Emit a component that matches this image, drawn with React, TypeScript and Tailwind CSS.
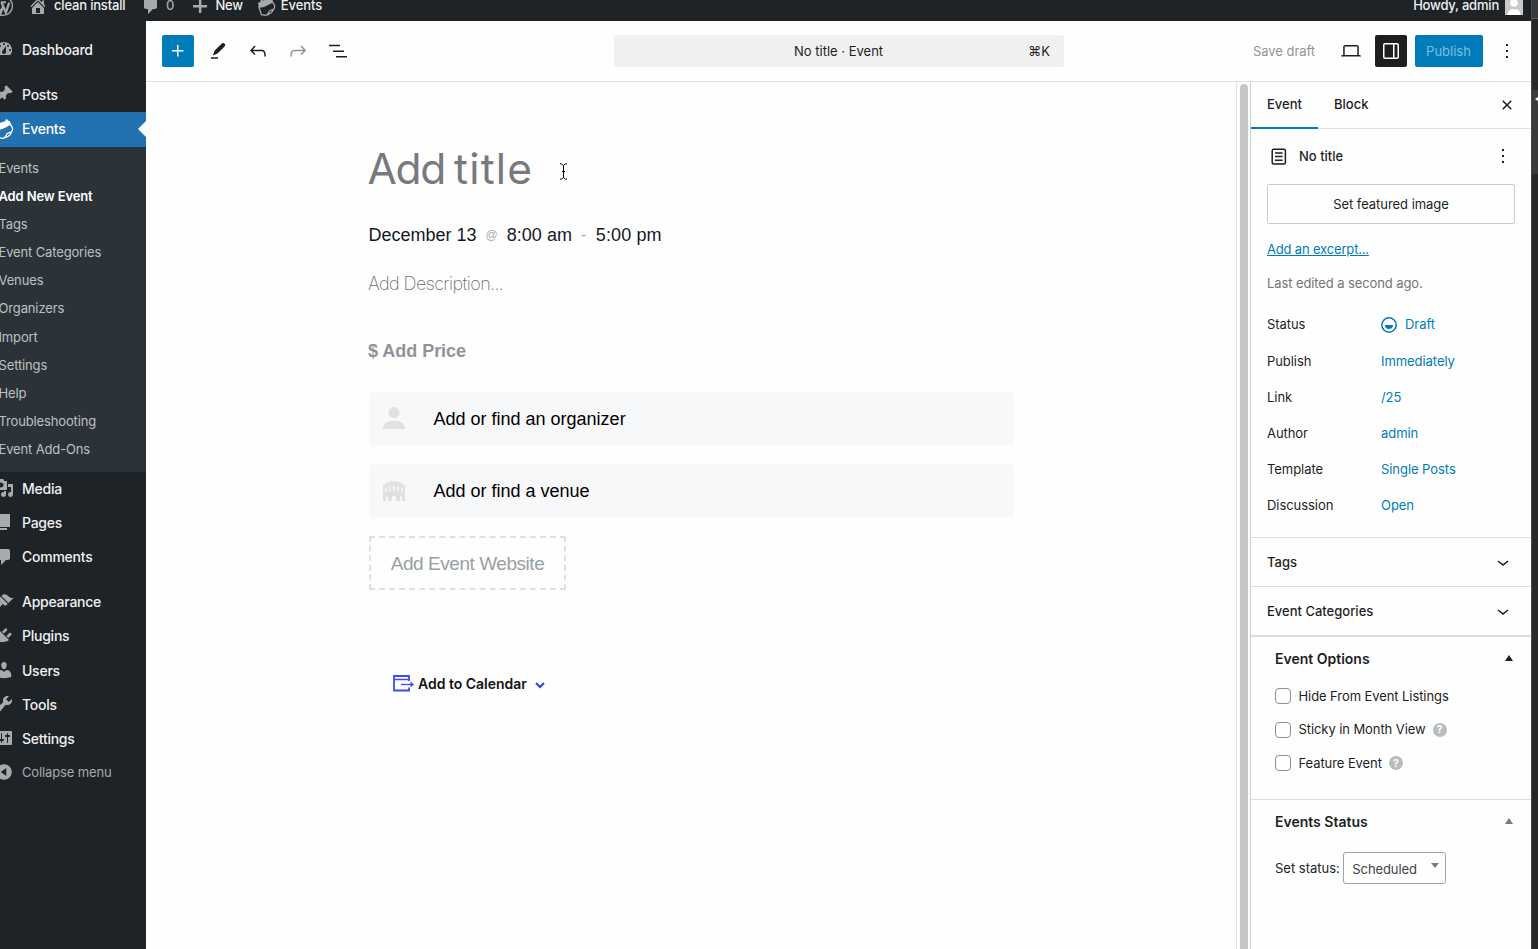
import React from "react";

const P = {
  dashboard:
    "M3.76 16h12.48c1.1-1.37 1.76-3.11 1.76-5 0-4.42-3.58-8-8-8s-8 3.58-8 8c0 1.89.66 3.63 1.76 5zM10 4c.55 0 1 .45 1 1s-.45 1-1 1-1-.45-1-1 .45-1 1-1zM6 6c.55 0 1 .45 1 1s-.45 1-1 1-1-.45-1-1 .45-1 1-1zm8 0c.55 0 1 .45 1 1s-.45 1-1 1-1-.45-1-1 .45-1 1-1zm-5.37 5.55L12 7v6c0 1.1-.9 2-2 2s-2-.9-2-2c0-.57.24-1.08.63-1.45zM4 10c.55 0 1 .45 1 1s-.45 1-1 1-1-.45-1-1 .45-1 1-1zm12 0c.55 0 1 .45 1 1s-.45 1-1 1-1-.45-1-1 .45-1 1-1z",
  posts:
    "M10.44 3.02l1.82-1.82 6.36 6.35-1.83 1.82c-1.05-.68-2.48-.57-3.41.36l-.75.75c-.92.93-1.04 2.35-.35 3.41l-1.83 1.82-2.41-2.41-2.8 2.79c-.42.42-3.38 2.71-3.8 2.29s1.86-3.39 2.28-3.81l2.79-2.79L4.1 9.36l1.83-1.82c1.05.69 2.48.57 3.4-.36l.75-.75c.93-.92 1.05-2.35.36-3.41z",
  media:
    "M13 11V4c0-.55-.45-1-1-1h-1.67L9 1H5L3.67 3H2c-.55 0-1 .45-1 1v7c0 .55.45 1 1 1h10c.55 0 1-.45 1-1zM7 4.5c1.38 0 2.5 1.12 2.5 2.5S8.38 9.5 7 9.5 4.5 8.38 4.5 7 5.62 4.5 7 4.5zM14 6h5v10.5c0 1.38-1.12 2.5-2.5 2.5S14 17.88 14 16.5s1.12-2.5 2.5-2.5c.17 0 .34.02.5.05V9h-3V6zm-4 8.05V13h2v3.5c0 1.38-1.12 2.5-2.5 2.5S7 17.88 7 16.5 8.12 14 9.5 14c.17 0 .34.02.5.05z",
  pages: "M6 15V2h10v13H6zm-1 1h8v2H3V5h2v11z",
  comments: "M5 2h9c1.1 0 2 .9 2 2v7c0 1.1-.9 2-2 2h-2l-5 5v-5H5c-1.1 0-2-.9-2-2V4c0-1.1.9-2 2-2z",
  appearance:
    "M14.48 11.06L7.41 3.99l1.5-1.5c.5-.56 2.3-.47 3.51.32 1.21.8 1.43 1.28 2.91 2.1 1.18.64 2.45 1.26 4.45.85zm-.71.71L6.7 4.7 4.93 6.47c-.39.39-.39 1.02 0 1.41l1.06 1.06c.39.39.39 1.03 0 1.42-.6.6-1.43 1.11-2.21 1.69-.35.26-.7.53-1.01.84C1.43 14.23.4 16.08 1.4 17.07c.99 1 2.84-.03 4.18-1.36.31-.31.58-.66.85-1.02.57-.78 1.08-1.61 1.69-2.21.39-.39 1.02-.39 1.41 0l1.06 1.06c.39.39 1.02.39 1.41 0z",
  plugins:
    "M13.11 4.36L9.87 7.6 8 5.73l3.24-3.24c.35-.34 1.05-.2 1.56.32.52.51.66 1.21.31 1.55zm-8 1.77l.91-1.12 9.01 9.01-1.19.84c-.71.71-2.63 1.16-3.82 1.16H6.14L4.9 17.26c-.59.59-1.54.59-2.12 0-.59-.58-.59-1.53 0-2.12l1.24-1.24v-3.88c0-1.13.4-3.19 1.09-3.89zm7.26 3.97l3.24-3.24c.34-.35 1.04-.21 1.55.31.52.51.66 1.21.31 1.55l-3.24 3.25z",
  users:
    "M10 9.25c-2.27 0-2.73-3.44-2.73-3.44C7 4.02 7.82 2 9.97 2c2.16 0 2.98 2.02 2.71 3.81 0 0-.41 3.44-2.68 3.44zm0 2.57L12.72 10c2.39 0 4.52 2.33 4.52 4.53v2.49s-3.65 1.13-7.24 1.13c-3.65 0-7.24-1.13-7.24-1.13v-2.49c0-2.25 1.94-4.48 4.47-4.48z",
  tools:
    "M16.68 9.77c-1.34 1.34-3.3 1.67-4.95.99l-5.41 6.52c-.99.99-2.59.99-3.58 0s-.99-2.59 0-3.57l6.52-5.42c-.68-1.65-.35-3.61.99-4.95 1.28-1.28 3.12-1.62 4.72-1.06l-2.89 2.89 2.82 2.82 2.86-2.87c.53 1.58.18 3.39-1.08 4.65z",
  settings:
    "M18 16V4c0-.55-.45-1-1-1H3c-.55 0-1 .45-1 1v12c0 .55.45 1 1 1h14c.55 0 1-.45 1-1zM8 11h1c.55 0 1 .45 1 1s-.45 1-1 1H8v1.5c0 .28-.22.5-.5.5s-.5-.22-.5-.5V13H6c-.55 0-1-.45-1-1s.45-1 1-1h1V5.5c0-.28.22-.5.5-.5s.5.22.5.5V11zm5-2h-1c-.55 0-1-.45-1-1s.45-1 1-1h1V5.500c0-.28.22-.5.5-.5s.5.22.5.5V7h1c.55 0 1 .45 1 1s-.45 1-1 1h-1v5.500c0 .28-.22.5-.5.5s-.5-.22-.5-.5V9z",
  collapse:
    "M10 2.200a7.800 7.800 0 1 0 0 15.600a7.800 7.800 0 1 0 0-15.600zM12.300 6v8L6.800 10z",
  home: "M16 8.5l1.53 1.53-1.06 1.06L10 4.6l-6.47 6.49-1.06-1.06L10 2.5l4 4v-2h2v4zm-6-2.46l6 5.99V18H4v-5.97zM12 17v-5H8v5h4z",
  plus: "M17 9v2.400h-5.600V17H8.900v-5.600H3V9h5.900V3h2.500v6z",
};

function Dash({ d, className }: { d: string; className?: string }) {
  return (
    <svg viewBox="0 0 20 20" fillRule="evenodd" className={"size-5 shrink-0 fill-[#a7aaad] " + (className ?? "")}>
      <path d={d} />
    </svg>
  );
}

function EventsIcon({ className }: { className: string }) {
  return (
    <svg viewBox="0 0 20 20" className={className} fill="none" stroke="currentColor">
      <path d="M1 6.400 3.800 5 3.600 2.800 5.400 2.400 6.200 3.800 11.400 2.200 11.400.6 13.200.2 14 1.600 15.800 2.200 17.400 5.800C13 7 10 10.800 2.200 11.400z" fill="currentColor" stroke="none" />
      <path d="M1.800 9.500 4.600 18.600 8.800 19.300C13 18.600 11.600 15 14 14.200L17.600 12.800C19.600 10.800 18.800 8.600 16.600 5.600M8.800 19.300C12.500 19.200 16.600 16 17.600 12.800" strokeWidth="1.300" />
    </svg>
  );
}

function MenuItem({ d, label }: { d: string; label: string }) {
  return (
    <div className="-ml-1.5 flex h-[34.2px] shrink-0 items-center gap-2">
      <Dash d={d} />
      <span className="text-[14px] font-medium tracking-[-0.25px] text-[#f0f0f1]">{label}</span>
    </div>
  );
}

const subItems = [
  "Events", "Add New Event", "Tags", "Event Categories", "Venues", "Organizers",
  "Import", "Settings", "Help", "Troubleshooting", "Event Add-Ons",
];

function AdminBar() {
  return (
    <header className="flex h-[21px] shrink-0 bg-[#1d2327]">
      <div className="-mt-[10px] flex h-8 w-[1531px] shrink-0 items-center text-[13px] font-medium leading-[10px] text-[#f0f0f1] [&>span]:pb-[2px]">
        <svg viewBox="0 0 20 20" className="-ml-[8px] size-[22px] shrink-0" fill="none" stroke="#a7aaad">
          <circle cx="10" cy="10" r="8.600" strokeWidth="1.200" />
          <path d="M4 6.600 8 16 10.400 9.400M8.600 6.600 12.600 16 15.600 7M2.600 6.600H7M8 6.600h4.600" strokeWidth="2" />
        </svg>
        <Dash d={P.home} className="-mt-px ml-[14px]" />
        <span className="ml-[6px] w-[88px] whitespace-nowrap tracking-[-0.18px]">clean install</span>
        <Dash d={P.comments} className="-ml-[1px]" />
        <span className="ml-[5px] text-[#a7aaad]">0</span>
        <Dash d={P.plus} className="ml-[16px]" />
        <span className="ml-[5px] tracking-[-0.200px]">New</span>
        <EventsIcon className="ml-[14px] size-[19px] text-[#a7aaad]" />
        <span className="ml-[5px] tracking-[-0.1px]">Events</span>
        <span className="ml-auto tracking-[-0.2px]">Howdy, admin</span>
        <svg viewBox="0 0 18 18" className="-mt-[1px] ml-[6px] mr-[8px] size-[18px]">
          <rect width="18" height="18" fill="#c9c9c9" />
          <circle cx="9" cy="6" r="3.800" fill="#fff" />
          <path d="M2.500 18c0-3.500 2-5.500 4.500-6l2 .5 2-.5c2.500.5 4.500 2.500 4.500 6z" fill="#fff" />
        </svg>
      </div>
    </header>
  );
}

function Sidebar() {
  return (
    <nav className="flex w-[146px] shrink-0 flex-col overflow-hidden bg-[#1d2327] pt-[11px]">
      <MenuItem d={P.dashboard} label="Dashboard" />
      <div className="h-[10.800px] shrink-0" />
      <MenuItem d={P.posts} label="Posts" />
      <div className="mt-px flex h-[35px] shrink-0 items-center justify-between bg-[#2271b1]">
        <div className="-ml-1.5 -mt-[2px] flex items-center gap-2">
          <EventsIcon className="size-5 text-white" />
          <span className="text-[14px] font-medium tracking-[-0.25px] text-white">Events</span>
        </div>
        <svg viewBox="0 0 8 16" className="-mt-px h-4 w-2 fill-[#fefefe]"><path d="M8 0v16L0 8z" /></svg>
      </div>
      <div className="h-[325px] shrink-0 bg-[#2c3338] pt-[7.500px]">
        {subItems.map((s, i) => (
          <div
            key={s}
            className={
              "-ml-[1.500px] flex h-[28.1px] items-center whitespace-nowrap text-[13px] tracking-[-0.14px] " +
              (i === 1 ? "font-semibold text-white" : "text-[#bcc0c3]")
            }
          >
            {s}
          </div>
        ))}
      </div>
      <div className="-mt-px">
        <MenuItem d={P.media} label="Media" />
        <MenuItem d={P.pages} label="Pages" />
        <MenuItem d={P.comments} label="Comments" />
        <div className="h-[10.800px] shrink-0" />
        <MenuItem d={P.appearance} label="Appearance" />
        <MenuItem d={P.plugins} label="Plugins" />
        <MenuItem d={P.users} label="Users" />
        <MenuItem d={P.tools} label="Tools" />
        <MenuItem d={P.settings} label="Settings" />
        <div className="-ml-1.5 flex h-[34px] shrink-0 items-center gap-2">
          <Dash d={P.collapse} />
          <span className="text-[13px] tracking-[-0.13px] text-[#a7aaad]">Collapse menu</span>
        </div>
      </div>
    </nav>
  );
}

function Dots() {
  return (
    <svg viewBox="0 0 24 24" className="size-6 fill-[#1e1e1e]">
      <path d="M13 19h-2v-2h2v2zm0-6h-2v-2h2v2zm0-6h-2V5h2v2z" />
    </svg>
  );
}

function EditorHeader() {
  return (
    <div className="flex h-[61px] shrink-0 items-center border-b border-[#e0e0e0] bg-[#fefefe] text-[13px] text-[#1e1e1e]">
      <div className="ml-4 flex size-8 items-center justify-center rounded-[2px] bg-[#007cba]">
        <svg viewBox="0 0 24 24" className="size-6 fill-white"><path d="M11 12.500V17.500H12.500V12.500H17.500V11H12.500V6H11V11H6V12.500H11Z" /></svg>
      </div>
      <svg viewBox="0 0 24 24" className="ml-3 size-6 fill-[#1e1e1e]">
        <path d="M18.600 4.700c-.9-.9-2.100-.9-3 0l-6.900 6.900-2 4.800 4.800-2 7.100-7c.8-.8.8-2 0-2.700zM5 18.200h7v1.600H5z" />
      </svg>
      <svg viewBox="0 0 24 24" className="ml-4 size-6 fill-[#1e1e1e]">
        <path d="M18.300 11.700c-.6-.6-1.400-.9-2.300-.9H6.700l2.900-3.300-1.100-1-4.500 5L8.500 16l1-1-2.700-2.700H16c.5 0 .9.2 1.300.5 1 1 1 3.400 1 4.500v.3h1.500v-.2c0-1.500 0-4.300-1.500-5.700z" />
      </svg>
      <svg viewBox="0 0 24 24" className="ml-4 size-6 fill-[#949494]">
        <path d="M15.600 6.500l-1.100 1 2.900 3.300H8c-.9 0-1.700.3-2.300.9-1.400 1.500-1.400 4.200-1.400 5.600v.2h1.500v-.3c0-1.100 0-3.500 1-4.500.3-.3.700-.5 1.300-.5h9.200L14.500 15l1.100 1.100 4.600-4.600-4.600-5z" />
      </svg>
      <svg viewBox="0 0 24 24" className="ml-4 size-6 fill-[#1e1e1e]">
        <path d="M3 5.800h11v1.400H3zM7 11.500h11v1.500H7zM10 17h11v1.500H10z" />
      </svg>
      <div className="ml-[264px] flex h-8 w-[450px] items-center rounded-[3px] bg-[#f0f0f0] pt-[2px]">
        <span className="ml-[180px]">No title · Event</span>
        <span className="ml-auto mr-[14px]">⌘K</span>
      </div>
      <span className="ml-[189px] pt-[2px] tracking-[-0.050px] text-[#949494]">Save draft</span>
      <svg viewBox="0 0 24 24" className="ml-[23.500px] size-6 fill-[#1e1e1e]">
        <path d="M20.500 16h-.7V8c0-1.100-.9-2-2-2H6.200c-1.100 0-2 .9-2 2v8h-.7c-.8 0-1.500.7-1.500 1.500h20c0-.8-.7-1.500-1.500-1.500zM5.700 8c0-.3.200-.5.500-.5h11.600c.3 0 .5.200.5.500v8H5.700V8z" />
      </svg>
      <div className="ml-3 flex size-8 items-center justify-center rounded-[2px] bg-[#1e1e1e]">
        <svg viewBox="0 0 24 24" className="size-6 fill-white" fillRule="evenodd">
          <path d="M18 4H6c-1.100 0-2 .9-2 2v12c0 1.100.9 2 2 2h12c1.100 0 2-.9 2-2V6c0-1.100-.9-2-2-2zm-4 14.500H6c-.3 0-.5-.2-.5-.5V6c0-.3.200-.5.500-.5h8v13zm4.500-.5c0 .3-.2.5-.5.5h-2.500v-13H18c.3 0 .5.200.5.500v12z" />
        </svg>
      </div>
      <div className="ml-2 flex h-8 w-[68px] items-center justify-center rounded-[2px] bg-[#007cba] pt-[2px] text-[#7fbddc]">Publish</div>
      <div className="ml-3"><Dots /></div>
    </div>
  );
}

function Canvas() {
  return (
    <main className="w-[1090px] shrink-0 pl-[223px] font-['Liberation_Sans',sans-serif]">
      <div className="mt-[59px] flex h-[56px] items-center">
        <span className="-ml-[1.500px] w-[163px] whitespace-pre font-['Inter',sans-serif] text-[42.5px] leading-none text-[#78787f]">
          <span className="tracking-[-1.300px]">Add</span>
          <span className="tracking-[1.200px] [word-spacing:-4px]"> title</span>
        </span>
        <svg viewBox="0 0 9 17" className="ml-[28px] mt-[4px] h-[17px] w-[9px]" fill="none" stroke="#000">
          <path d="M1 .8C3 .8 4.500 1.500 4.500 3.500v10c0 2-1.500 2.700-3.500 2.700M8 .8C6 .8 4.500 1.500 4.500 3.500v10c0 2 1.500 2.700 3.500 2.700M3 8.500h3" />
        </svg>
      </div>
      <div className="-ml-[0.500px] mt-[25px] flex h-[26px] items-center whitespace-pre text-[18px] text-[#141827]">
        <span>December 13</span>
        <span className="ml-[9px] mr-[9px] text-[12px] text-[#a9abb1]">@</span>
        <span className="tracking-[0.030px]">8:00 am</span>
        <span className="ml-[9px] mr-[9.500px] text-[16px] text-[#a9abb1]">-</span>
        <span className="tracking-[0.120px]">5:00 pm</span>
      </div>
      <div className="-ml-px mt-[22px] flex h-[26px] items-center font-['Inter',sans-serif] text-[18px] font-extralight tracking-[-0.600px] text-[#6f6f73]">Add Description...</div>
      <div className="-ml-px mt-[42px] flex h-[26px] items-center text-[18px] font-bold tracking-[-0.030px] text-[#8d949b]">$ Add Price</div>
      <div className="mt-[28px] flex h-[53px] w-[645px] items-center rounded-[4px] bg-[#f7f8fa] text-[18px] text-black">
        <svg viewBox="0 0 22 22" className="-mt-[2px] ml-[14px] size-[22px] fill-[#e1e1e1]">
          <circle cx="11" cy="5.600" r="5.600" />
          <path d="M0 21c0-4 5-7.500 11-7.500S22 17 22 21c0 .7-.3 1-1 1H1c-.7 0-1-.3-1-1z" />
        </svg>
        <span className="ml-[28.500px] pt-[2px]">Add or find an organizer</span>
      </div>
      <div className="mt-[19px] flex h-[53px] w-[645px] items-center rounded-[4px] bg-[#f7f8fa] text-[18px] text-black">
        <svg viewBox="0 0 22 20" className="ml-[14px] h-[20px] w-[22px] fill-[#e1e1e1]" fillRule="evenodd">
          <path d="M0 20V5C3 1.500 7 0 11 0s8 1.500 11 5v15h-3v-4q-1-1.500-2 0v4h-4v-4q-2-2.500-4 0v4H5v-4q-1-1.500-2 0v4zM2 7v4h1.500V6.300zM6 5.500V10h1.500V5zM10 5v5h1.800V5zM14.500 5v5H16V5.500zM18.500 6.300V11H20V7z" />
        </svg>
        <span className="ml-[28.500px] pt-[2px]">Add or find a venue</span>
      </div>
      <div className="mt-[19px] flex h-[54px] w-[197px] items-center justify-center border-2 border-dashed border-[#e0e0e0] pt-[2px] text-[19px] tracking-[-0.450px] text-[#989ea4]">Add Event Website</div>
      <div className="mt-[80px] flex h-[26px] items-center pl-[24px] text-[14px] font-semibold text-[#141414]">
        <svg viewBox="0 0 21 17" className="h-[17px] w-[21px]" fill="none" stroke="#3d4bf2">
          <path d="M16 6V1H1v14.500h15v-3" strokeWidth="1.800" />
          <path d="M1 4.500h15" strokeWidth="1.500" />
          <path d="M8 9.500h10" strokeWidth="1.300" />
          <path d="M17.500 6.500 21 9.500l-3.500 3z" fill="#3d4bf2" stroke="none" />
        </svg>
        <span className="ml-[4px] font-['Inter',sans-serif] tracking-[-0.020px]">Add to Calendar</span>
        <svg viewBox="0 0 10 7" className="ml-[8px] mt-[4px] h-[7px] w-[10px]" fill="none" stroke="#3440d8" strokeWidth="2"><path d="M1 1l4 4 4-4" /></svg>
      </div>
    </main>
  );
}

function Row({ label, value }: { label: string; value: string }) {
  return (
    <div className="flex h-9 items-center">
      <span className="w-[114px]">{label}</span>
      <span className="flex items-center text-[#007cba]">
        {label === "Status" && (
          <svg viewBox="0 0 16 16" className="mr-2 size-4" fill="none" stroke="#007cba">
            <circle cx="8" cy="8" r="7.200" strokeWidth="1.500" />
            <path d="M4 8h8a4 4 0 0 1-8 0z" fill="#007cba" stroke="none" />
          </svg>
        )}
        {value}
      </span>
    </div>
  );
}

function Panel({ label }: { label: string }) {
  return (
    <div className="flex h-[49px] items-center justify-between border-t border-[#e0e0e0] pl-4 pr-4 font-medium">
      <span className="pt-px">{label}</span>
      <svg viewBox="0 0 24 24" className="size-6 fill-[#1e1e1e]"><path d="M17.500 11.600L12 16l-5.500-4.400.9-1.200L12 14l4.500-3.600 1 1.200z" /></svg>
    </div>
  );
}

function Check({ label, help }: { label: string; help?: boolean }) {
  return (
    <div className="flex h-[33.5px] items-center">
      <span className="size-4 rounded-[4px] border border-[#8c8f94] bg-white" />
      <span className="ml-[7.500px] pt-px tracking-[-0.080px]">{label}</span>
      {help && (
        <span className="ml-[7px] flex size-[14px] items-center justify-center rounded-full bg-[#b9bbbd] text-[11px] font-bold text-white">?</span>
      )}
    </div>
  );
}

function Inspector() {
  return (
    <aside className="w-[281px] shrink-0 border-l border-[#cfcfcf] bg-[#fefefe] text-[13px] text-[#1e1e1e]">
      <div className="flex h-[47px] items-stretch border-b border-[#e0e0e0] font-medium">
        <span className="-mb-px flex w-[67px] items-center border-b-2 border-[#007cba] pl-4">Event</span>
        <span className="flex items-center pl-4">Block</span>
        <svg viewBox="0 0 24 24" className="ml-auto mr-3 size-6 self-center fill-[#1e1e1e]">
          <path d="M12 13.060l3.712 3.713 1.061-1.060L13.061 12l3.712-3.712-1.060-1.060L12 10.938 8.288 7.227l-1.061 1.060L10.939 12l-3.712 3.712 1.060 1.061L12 13.061z" />
        </svg>
      </div>
      <div className="flex h-[55px] items-center pl-4">
        <svg viewBox="0 0 24 24" className="size-6" fill="none" stroke="#1e1e1e" strokeWidth="1.500">
          <rect x="5.200" y="4.200" width="13.200" height="14.800" rx="1.500" />
          <path d="M8 8h7.600M8 11.600h7.600M8 15.200h7.600" />
        </svg>
        <span className="ml-2 font-medium">No title</span>
        <div className="-mt-px ml-auto mr-4"><Dots /></div>
      </div>
      <div className="mx-4 flex h-10 items-center justify-center rounded-[2px] border border-[#ccc] pt-[2px] tracking-[-0.050px]">Set featured image</div>
      <div className="mt-[16px] flex h-5 items-center pl-4"><span className="tracking-[-0.170px] text-[#007cba] underline">Add an excerpt...</span></div>
      <div className="mt-[14px] flex h-5 items-center pl-4 tracking-[-0.100px] text-[#757575]">Last edited a second ago.</div>
      <div className="mt-[13px] h-[230px] pl-4 tracking-[-0.060px]">
        <Row label="Status" value="Draft" />
        <div className="h-px" />
        <Row label="Publish" value="Immediately" />
        <Row label="Link" value="/25" />
        <Row label="Author" value="admin" />
        <Row label="Template" value="Single Posts" />
        <Row label="Discussion" value="Open" />
      </div>
      <Panel label="Tags" />
      <Panel label="Event Categories" />
      <div className="h-[164px] border-t-2 border-[#dcdcdc] pl-6">
        <div className="flex h-[43px] items-center justify-between pr-[18px] text-[14px] font-semibold">
          Event Options
          <svg viewBox="0 0 8 6" className="-mt-px h-[6px] w-2 fill-[#1e1e1e]"><path d="M4 0l4 6H0z" /></svg>
        </div>
        <div className="-mt-[0.700px]">
          <Check label="Hide From Event Listings" />
          <Check label="Sticky in Month View" help />
          <Check label="Feature Event" help />
        </div>
      </div>
      <div className="border-t border-[#dcdcdc] pl-6">
        <div className="flex h-[43px] items-center justify-between pr-[18px] text-[14px] font-semibold">
          Events Status
          <svg viewBox="0 0 8 6" className="-mt-px h-[6px] w-2 fill-[#787c82]"><path d="M4 0l4 6H0z" /></svg>
        </div>
        <div className="mt-[9px] flex h-8 items-center">
          <span className="pt-[2px]">Set status:</span>
          <div className="ml-[3px] flex h-8 w-[103px] items-center justify-between rounded-[3px] border border-[#a0a3a6] pl-[8.500px] pr-[6px] pt-[3px] tracking-[-0.100px] text-[#3c434a]">
            Scheduled
            <svg viewBox="0 0 8 5" className="-mt-[8px] h-[5px] w-2 fill-[#787c82]"><path d="M0 0h8L4 5z" /></svg>
          </div>
        </div>
      </div>
    </aside>
  );
}

export default function App() {
  return (
    <div className="flex h-[949px] w-[1538px] overflow-hidden bg-[#fefefe] font-['Inter',sans-serif]">
      <div className="flex w-[1531px] shrink-0 flex-col">
        <AdminBar />
        <div className="flex min-h-0 flex-1">
          <Sidebar />
          <div className="flex w-[1385px] shrink-0 flex-col">
            <EditorHeader />
            <div className="flex min-h-0 flex-1">
              <Canvas />
              <div className="flex w-[14px] shrink-0 border-l border-[#e4e4e4] pl-[3px] pt-[2px]">
                <div className="w-2 rounded-t-full bg-[#c6c6c6]" />
              </div>
              <Inspector />
            </div>
          </div>
        </div>
      </div>
      <div className="flex w-[7px] shrink-0 flex-col border-l border-[#4a4a4a] bg-[#282828]">
        <div className="h-[19px] border-b border-[#5a5a5a] bg-[#3a3a3a]" />
        <div className="mt-[71px] h-[84px] bg-[#3b3b3b]">
          <svg viewBox="0 0 3 4" className="ml-[3px] mt-[7px] h-1 w-[3px] fill-white"><path d="M3 0v4L0 2z" /></svg>
        </div>
      </div>
    </div>
  );
}
